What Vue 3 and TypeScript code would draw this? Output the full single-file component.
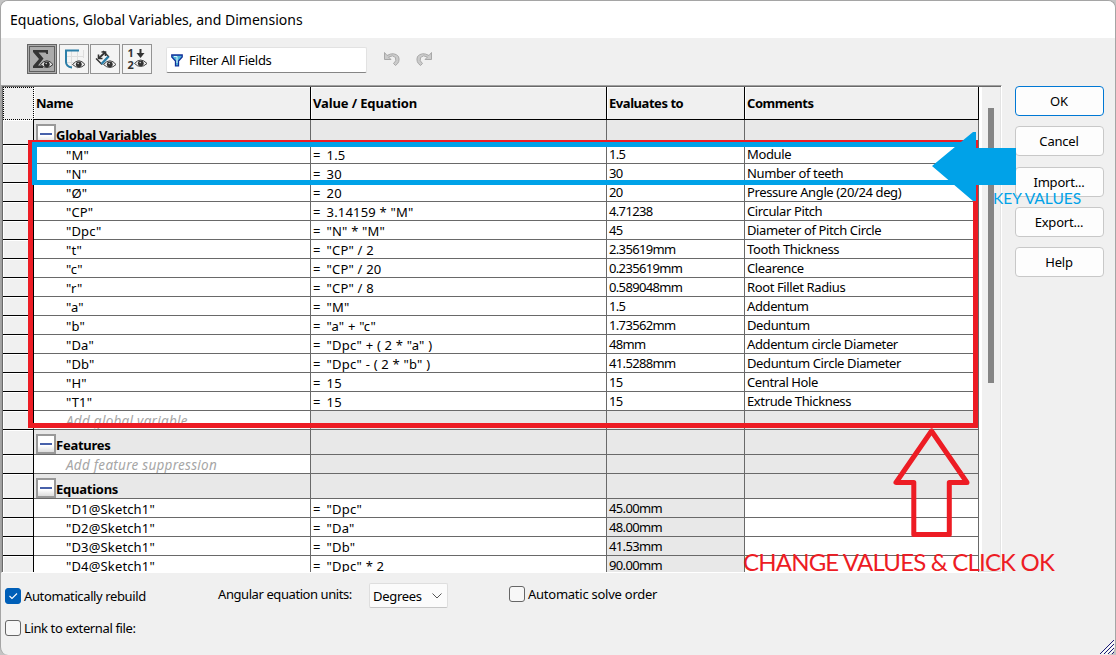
<script setup lang="ts">
type Kind = 'data' | 'section' | 'add'
interface Row {
  kind: Kind
  name: string
  value?: string
  result?: string
  comment?: string
  locked?: boolean
}

const v = (name: string, value: string, result: string, comment: string): Row => ({
  kind: 'data', name: `"${name}"`, value, result, comment,
})
const eq = (name: string, value: string, result: string): Row => ({
  kind: 'data', name: `"${name}"`, value, result, locked: true,
})

const rows: Row[] = [
  { kind: 'section', name: 'Global Variables' },
  v('M', '1.5', '1.5', 'Module'),
  v('N', '30', '30', 'Number of teeth'),
  v('Ø', '20', '20', 'Pressure Angle (20/24 deg)'),
  v('CP', '3.14159 * "M"', '4.71238', 'Circular Pitch'),
  v('Dpc', '"N" * "M"', '45', 'Diameter of Pitch Circle'),
  v('t', '"CP" / 2', '2.35619mm', 'Tooth Thickness'),
  v('c', '"CP" / 20', '0.235619mm', 'Clearence'),
  v('r', '"CP" / 8', '0.589048mm', 'Root Fillet Radius'),
  v('a', '"M"', '1.5', 'Addentum'),
  v('b', '"a" + "c"', '1.73562mm', 'Deduntum'),
  v('Da', '"Dpc" + ( 2 * "a" )', '48mm', 'Addentum circle Diameter'),
  v('Db', '"Dpc" - ( 2 * "b" )', '41.5288mm', 'Deduntum Circle Diameter'),
  v('H', '15', '15', 'Central Hole'),
  v('T1', '15', '15', 'Extrude Thickness'),
  { kind: 'add', name: 'Add global variable' },
  { kind: 'section', name: 'Features' },
  { kind: 'add', name: 'Add feature suppression' },
  { kind: 'section', name: 'Equations' },
  eq('D1@Sketch1', '"Dpc"', '45.00mm'),
  eq('D2@Sketch1', '"Da"', '48.00mm'),
  eq('D3@Sketch1', '"Db"', '41.53mm'),
  eq('D4@Sketch1', '"Dpc" * 2', '90.00mm'),
]
const buttons = ['OK', 'Cancel', 'Import...', 'Export...', 'Help']
</script>

<template>
  <div class="backdrop">
    <div class="dialog">
      <header class="title">Equations, Global Variables, and Dimensions</header>

      <div class="toolbar">
        <div class="tool active">
          <svg width="30" height="30" viewBox="0 0 30 30">
            <rect x="2.5" y="2.5" width="25" height="25" fill="none" stroke="#111" stroke-dasharray="1 1" />
            <path d="M6 6H21V10H19.5L18.5 8.500H11.500L16.500 14.500L11 21.500H16V24H6V22L12 15L6 8Z" fill="#333" />
            <path d="M13.500 20.500Q20 13 26 20.500Q20 26.500 13.500 20.500Z" fill="#e0e0e0" stroke="#333" />
            <circle cx="19.800" cy="20.300" r="2.900" fill="#2d2d2d" /><circle cx="19.200" cy="19.500" r=".8" fill="#ccc" />
          </svg>
        </div>
        <div class="tool second">
          <svg width="30" height="30" viewBox="0 0 30 30">
            <path d="M6 12.500H25M6 18.500H25M12.500 6V25M18.500 6V25M24.500 6V14" stroke="#dedede" fill="none" />
            <path d="M20 6.500H7V18Q7 22.500 13 23.500" fill="none" stroke="#2b7ea8" stroke-width="2" />
            <path d="M13.500 20.500Q20 13 26 20.500Q20 26.500 13.500 20.500Z" fill="#eee" stroke="#444" />
            <circle cx="19.800" cy="20.300" r="2.900" fill="#333" /><circle cx="19.200" cy="19.500" r=".8" fill="#ccc" />
          </svg>
        </div>
        <div class="tool">
          <svg width="30" height="30" viewBox="0 0 30 30">
            <path d="M12 20.500L6 14.500M19 13L13 7" stroke="#333" stroke-width="1.400" fill="none" />
            <path d="M9 14L15 8.500" stroke="#333" stroke-width="1.800" fill="none" />
            <path d="M8.500 10.500V14.500H12.500M11.500 8H15.500V12" stroke="#333" stroke-width="1.600" fill="none" />
            <path d="M11.500 20L18.500 12.500" stroke="#2b7ea8" stroke-width="2.500" />
            <path d="M13.500 20.500Q20 13 26 20.500Q20 26.500 13.500 20.500Z" fill="#eee" stroke="#444" />
            <circle cx="19.800" cy="20.300" r="2.900" fill="#333" /><circle cx="19.200" cy="19.500" r=".8" fill="#ccc" />
          </svg>
        </div>
        <div class="tool last">
          <svg width="30" height="30" viewBox="0 0 30 30">
            <text class="digit" x="5.500" y="13">1</text>
            <text class="digit" x="5.500" y="24.500">2</text>
            <path d="M18.500 5V10" stroke="#333" stroke-width="2" /><path d="M14.500 9H22.500L18.500 14Z" fill="#333" />
            <path d="M12.500 19.500Q18.500 12.500 25 19.500Q18.500 25.500 12.500 19.500Z" fill="#eee" stroke="#444" />
            <circle cx="18.800" cy="19.300" r="2.900" fill="#333" /><circle cx="18.200" cy="18.500" r=".8" fill="#ccc" />
          </svg>
        </div>
        <div class="filter">
          <svg width="12" height="13" viewBox="0 0 12 13">
            <path d="M.8 1H11.200V3L7.500 7V11.800H4.500V7L.8 3Z" fill="#4fb4d8" stroke="#10309a" stroke-width="1.300" />
            <path d="M3 2.500H6V9" fill="none" stroke="#d8f4fa" />
          </svg>
          <span>Filter All Fields</span>
        </div>
        <svg class="undo" width="18" height="17" viewBox="0 0 18 17">
          <path d="M1.500 1.500V8.500H8L5.500 6Q10 3.500 12.500 6.500Q14 10 10.500 12.500L12.500 14.500Q17.500 11 15.500 5.500Q11 .5 4 4.500Z" fill="#cbcbcb" stroke="#a8a8a8" />
        </svg>
        <svg class="redo" width="18" height="17" viewBox="0 0 18 17">
          <path d="M16.500 1.500V8.500H10L12.500 6Q8 3.500 5.500 6.500Q4 10 7.500 12.500L5.500 14.500Q.5 11 2.500 5.500Q7 .5 14 4.500Z" fill="#cbcbcb" stroke="#a8a8a8" />
        </svg>
      </div>

      <main class="content">
        <div class="table-frame">
          <div class="grid">
            <div class="row head">
              <div class="gutter"></div>
              <div class="cell">Name</div>
              <div class="cell equation">Value / Equation</div>
              <div class="cell">Evaluates to</div>
              <div class="cell">Comments</div>
            </div>
            <div v-for="(r, i) in rows" :key="i" class="row" :class="r.kind">
              <div class="gutter"></div>
              <div class="cell name">
                <span v-if="r.kind === 'section'" class="toggle"></span>
                <span>{{ r.name }}</span>
              </div>
              <div class="cell value"><template v-if="r.value"><span class="equals">=</span>{{ r.value }}</template></div>
              <div class="cell result" :class="{ locked: r.locked }">{{ r.result }}</div>
              <div class="cell comment">{{ r.comment }}</div>
            </div>
          </div>
          <div class="scroll"><div class="thumb"></div></div>
        </div>
        <nav class="buttons">
          <button v-for="b in buttons" :key="b" :class="{ primary: b === 'OK' }">{{ b }}</button>
        </nav>
      </main>

      <footer class="options">
        <label class="check rebuild">
          <span class="box on">
            <svg width="14" height="14" viewBox="0 0 14 14"><path d="M3.500 7L6 9.500L11 4.500" fill="none" stroke="#fff" stroke-width="1.100" /></svg>
          </span>
          <span>Automatically rebuild</span>
        </label>
        <span class="units">Angular equation units:</span>
        <div class="select">
          <span>Degrees</span>
          <svg width="10" height="6" viewBox="0 0 10 6"><path d="M.5 .5L5 5L9.500 .5" fill="none" stroke="#555" /></svg>
        </div>
        <label class="check solve"><span class="box"></span><span>Automatic solve order</span></label>
      </footer>
      <label class="check link"><span class="box"></span><span>Link to external file:</span></label>
    </div>

    <svg class="grip" width="15" height="15" viewBox="0 0 15 15">
      <path d="M0 14L14 0M4 14L14 4M8 14L14 8M12 14L14 12" stroke="#1c1c78" stroke-width="1" />
      <path d="M2 14L14 2M6 14L14 6M10 14L14 10" stroke="#fff" stroke-width="1" />
    </svg>

    <svg class="marks" width="1116" height="655" viewBox="0 0 1116 655">
      <rect x="30.500" y="142.500" width="945" height="283" fill="none" stroke="#ed1c24" stroke-width="5" />
      <rect x="34.500" y="144.500" width="937" height="38" fill="none" stroke="#00a2e8" stroke-width="5" />
      <path d="M932 166L973 132H976V148H1016V185H976V201H973Z" fill="#00a2e8" />
      <path d="M931.500 431L896 482.500H913.800V534.500H949.300V482.500H967Z" fill="none" stroke="#ed1c24" stroke-width="5" stroke-linejoin="round" />
    </svg>
    <div class="note key">KEY VALUES</div>
    <div class="note change">CHANGE VALUES &amp; CLICK OK</div>
  </div>
</template>

<style>
html, body { margin: 0; overflow: hidden; }
</style>

<style scoped>
.backdrop {
  position: relative;
  width: 1116px;
  height: 655px;
  overflow: hidden;
  background: #c4c4c4;
  font: 13px/18px "Noto Sans", "Open Sans", sans-serif;
  color: #000;
}
.backdrop *, .backdrop { box-sizing: border-box; }
.dialog {
  width: 1116px;
  height: 655px;
  border: 1px solid #a5a5a5;
  border-bottom: 0;
  border-radius: 8px;
  background: #f0f0f0;
  overflow: hidden;
  white-space: nowrap;
}
.title { height: 37px; padding: 9px 0 0 9px; background: #fff; font-size: 14px; line-height: 20px; }
.toolbar { display: flex; height: 47px; padding: 6px 0 0 26px; }
.tool { width: 30px; height: 30px; border: 1px solid #939393; background: #f4f4f4; margin-right: 1px; }
.tool svg { display: block; margin: -1px; }
.tool.active { background: #ababab; border-color: #666; margin-right: 2px; }
.tool.last { margin-left: 1px; margin-right: 14px; }
.digit { font: bold 11px/8px "Noto Sans", sans-serif; fill: #333; }
.filter {
  display: flex;
  align-items: center;
  gap: 6px;
  width: 201px;
  height: 26px;
  margin-top: 3px;
  padding: 0 4px;
  border: 1px solid #e2e2e2;
  border-bottom-color: #858585;
  border-radius: 2px;
  background: #fff;
  letter-spacing: -0.3px;
}
.undo { margin: 7px 0 0 16px; }
.redo { margin: 7px 0 0 14px; }
.content { display: flex; height: 488px; }
.table-frame {
  display: flex;
  width: 1001px;
  border: 1px solid #a0a0a0;
  border-right: 1px solid #fff;
  border-bottom: 1px solid #fff;
  box-shadow: inset 1px 1px #696969, inset -1px -1px #e3e3e3;
  padding: 1px 1px 1px;
}
.grid { width: 976px; height: 485px; overflow: hidden; }
.row { display: grid; grid-template-columns: 31px 277px 296px 138px 234px; height: 19px; }
.gutter { background: #f0f0f0; border-right: 1px solid #000; border-bottom: 1px solid #000; box-shadow: inset 1px 1px #fff; }
.cell { padding-left: 2px; border-right: 1px solid #696969; border-bottom: 1px solid #696969; background: #fff; overflow: hidden; line-height: 19px; }
.head { height: 33px; font-weight: bold; letter-spacing: -0.45px; }
.head .equation { letter-spacing: -0.13px; }
.head .cell { border-color: #000; background: #f0f0f0; line-height: 32px; box-shadow: inset 1px 1px #fff; }
.head .gutter { border: 1px dotted #000; box-shadow: none; }
.section { height: 25px; font-weight: bold; letter-spacing: -0.25px; }
.section .cell, .add .cell, .cell.locked { background: #e8e8e8; }
.section .name { display: flex; line-height: 30px; }
.add .name { background: #fff; color: #a6a6a6; font-size: 13.5px; font-style: italic; letter-spacing: 0.27px; }
.name { padding-left: 2px; }
.data .name, .add .name { padding-left: 32px; line-height: 20px; }
.data .name { letter-spacing: 0.15px; }
.value { line-height: 20px; letter-spacing: 0.2px; }
.equals { display: inline-block; width: 13.5px; }
.result { letter-spacing: -0.65px; }
.comment { letter-spacing: -0.38px; }
.toggle {
  display: flex;
  align-items: center;
  width: 20px;
  height: 20px;
  margin-top: 4px;
  border: 2px solid #999;
  background: linear-gradient(#fff 60%, #ddd);
}
.toggle::before { content: ""; width: 12px; height: 2px; margin-left: 2px; background: #4861aa; }
.scroll { flex: 1; border-left: 3px solid #fff; padding: 21px 0 0 6px; }
.thumb { width: 6px; height: 275px; background: #858585; }
.buttons { display: flex; flex-direction: column; gap: 10px; padding: 1px 0 0 13px; }
button {
  width: 89px;
  height: 30px;
  padding: 0 1px 0 0;
  border: 1px solid #c8c8c8;
  border-radius: 4px;
  background: #fdfdfd;
  font: inherit;
  letter-spacing: -0.2px;
  color: inherit;
}
button:nth-child(3) { margin-top: 1px; }
button.primary { border-color: #0078d4; }
.options { display: flex; height: 46px; padding: 10px 0 0 4px; }
.check { display: flex; gap: 3px; letter-spacing: -0.38px; }
.box { display: block; width: 16px; height: 16px; border: 1px solid #666; border-radius: 3px; background: #f7f7f7; }
.box.on { background: #005fb8; border-color: #005fb8; }
.box svg { display: block; }
.rebuild { width: 213px; padding-top: 4px; }
.rebuild .box { margin-top: 1px; }
.units { width: 151px; padding-top: 2px; letter-spacing: -0.42px; }
.select { display: flex; justify-content: space-between; align-items: center; width: 79px; height: 25px; padding: 0 5px 0 3px; border: 1px solid #dedede; border-bottom-color: #c6c6c6; border-radius: 2px; background: #fbfbfb; letter-spacing: -0.3px; }
.solve { margin-left: 61px; padding-top: 2px; letter-spacing: -0.25px; }
.solve .box { margin-top: 1px; }
.link { margin-left: 4px; }
.link .box { margin-top: 1px; }
.grip { position: absolute; left: 1100px; top: 640px; }
.marks { position: absolute; left: 0; top: 0; }
.note { position: absolute; white-space: nowrap; font-family: Lato, "Noto Sans", sans-serif; }
.key { left: 993px; top: 188px; font-size: 15.500px; line-height: 20px; color: #00a2e8; }
.change { left: 743px; top: 546px; font-size: 24px; line-height: 32px; letter-spacing: -0.82px; color: #ed1c24; }
</style>
